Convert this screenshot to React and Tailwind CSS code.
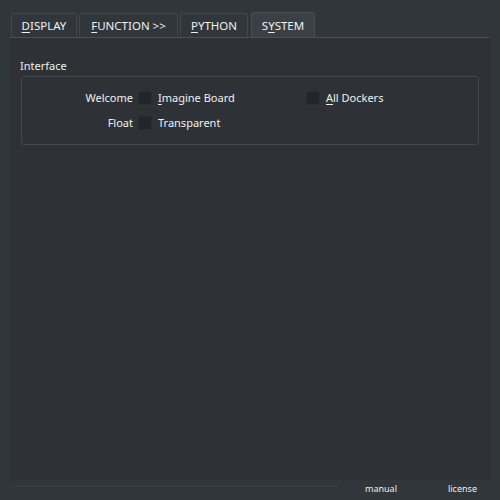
import React from "react"

const Tab = ({ children, w, active }) => (
  <div
    className={
      active
        ? "h-[26px] -mb-px flex items-center justify-center rounded-t-[3px] border border-b-0 border-[#4a4f55] bg-[#3b4045] text-[#eff0f1]"
        : "h-[24px] flex items-center justify-center rounded-t-[3px] border border-b-0 border-[#43484d] bg-[#31363b] text-[#eff0f1]"
    }
    style={{ width: w }}
  >
    {children}
  </div>
)

const U = ({ children }) => <span className="underline underline-offset-2 decoration-1">{children}</span>

const Box = () => <span className="block w-[14px] h-[14px] bg-[#232629] border border-[#2a2e32] shrink-0" />

const App = () => {
  return (
    <div
      className="w-[500px] h-[500px] bg-[#31363b] flex flex-col text-[11px] text-[#eff0f1]"
      style={{ fontFamily: '"Noto Sans", "Open Sans", sans-serif' }}
    >
      <div className="flex items-end pl-[11px] h-[37px] text-[11.5px]">
        <Tab w={66}><U>D</U>ISPLAY</Tab>
        <span className="w-[2px]" />
        <Tab w={99}><U>F</U>UNCTION &gt;&gt;</Tab>
        <span className="w-[2px]" />
        <Tab w={68}><U>P</U>YTHON</Tab>
        <span className="w-[3px]" />
        <Tab w={64} active>S<U>Y</U>STEM</Tab>
      </div>
      <div className="mx-[10px] h-[443px] bg-[#2e3236] border-t border-[#4b5056] px-[11px] pt-[22px]">
        <div className="leading-none -ml-px">Interface</div>
        <div className="mt-[5px] h-[69px] border border-[#43484d] rounded-[3px] px-[6px] pt-[14px] flex flex-col gap-[11px]">
          <div className="flex items-center h-[14px]">
            <span className="w-[105px] text-right">Welcome</span>
            <span className="ml-[5px]"><Box /></span>
            <span className="ml-[6px] w-[148px]"><U>I</U>magine Board</span>
            <Box />
            <span className="ml-[6px]"><U>A</U>ll Dockers</span>
          </div>
          <div className="flex items-center h-[14px]">
            <span className="w-[105px] text-right">Float</span>
            <span className="ml-[5px]"><Box /></span>
            <span className="ml-[6px]">Transparent</span>
          </div>
        </div>
      </div>
      <div className="mx-[10px] flex items-start h-[20px]">
        <span className="mt-[6px] w-[328px] border-t border-[#3a3f44]" />
        <div className="flex text-[9px] leading-none pt-[4px]">
          <span className="ml-[27px]">manual</span>
          <span className="ml-[51px]">license</span>
        </div>
      </div>
    </div>
  )
}

export default App
